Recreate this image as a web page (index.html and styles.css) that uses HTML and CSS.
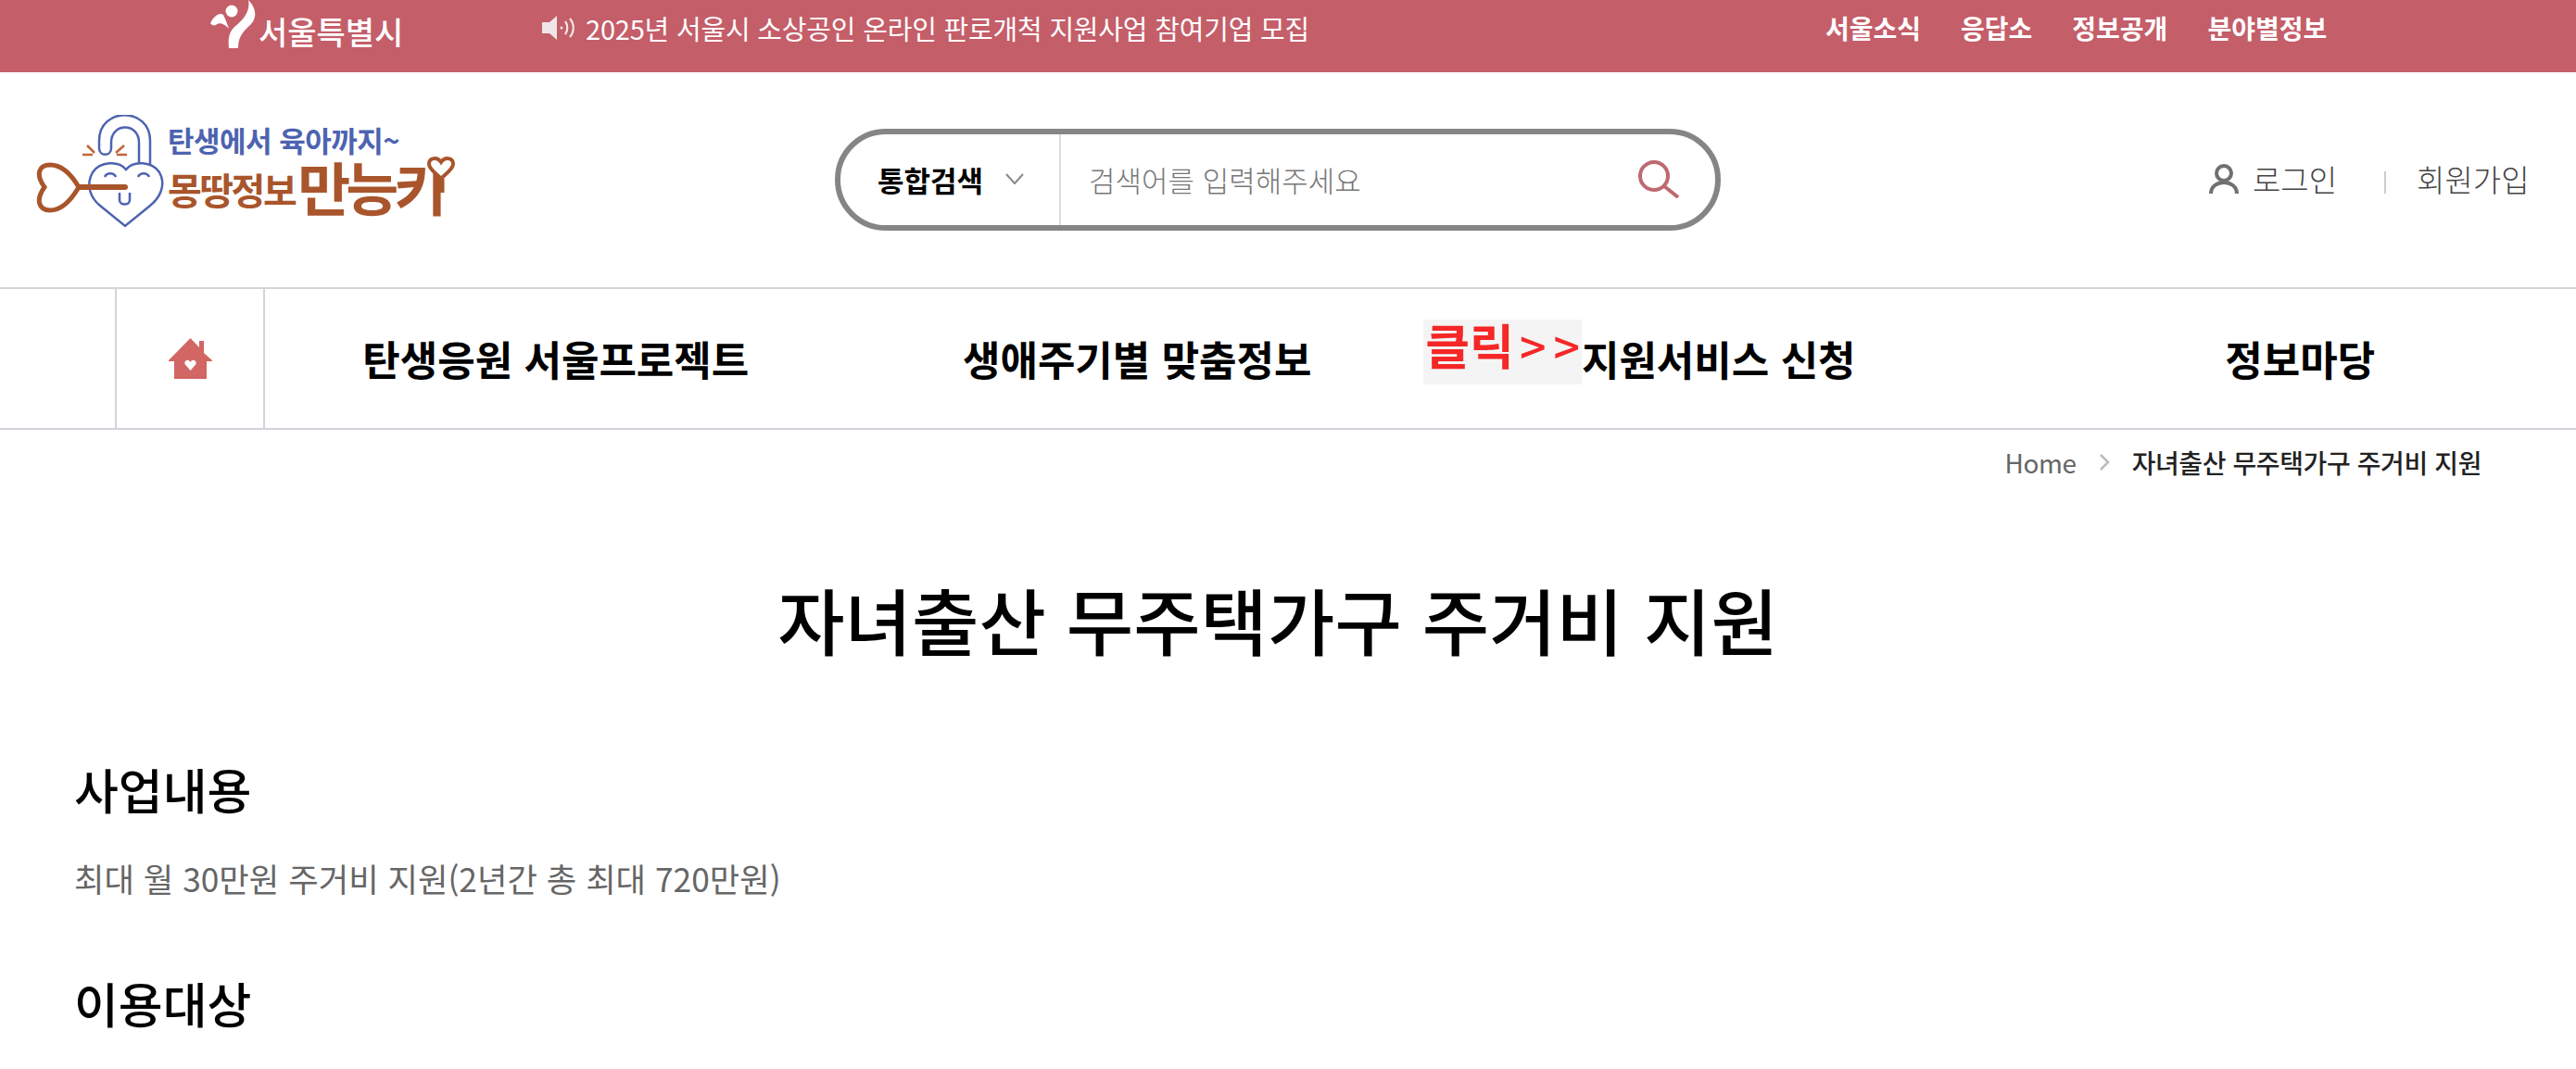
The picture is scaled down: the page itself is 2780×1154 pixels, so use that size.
FILE: index.html
```html
<!DOCTYPE html>
<html lang="ko">
<head>
    <meta charset="UTF-8">
    <meta name="viewport" content="width=device-width, initial-scale=1.0">
    <title>몽땅정보 만능키</title>
    <link rel="stylesheet" href="styles.css">
</head>
<body>
    <div class="topbar">
        <a class="seoul-logo" href="#">
            <svg class="seoul-mark" viewBox="0 0 50 52" width="50" height="52">
                <circle cx="23" cy="12" r="6.5" fill="#fff"/>
                <path d="M0 25C4 17 10 13 14 16C16 20 18 25 20 31C16 26 10 23 6 27C4 28 1 27 0 25Z" fill="#fff"/>
                <path d="M41 0C49 8 51 18 44 26C37 33 30 38 30 52L20 52C19 42 20 36 25 30C32 24 44 14 41 0Z" fill="#fff"/>
            </svg>
            <span class="seoul-name">서울특별시</span>
        </a>
        <div class="notice">
            <svg viewBox="0 0 38 26" width="38" height="26">
                <path d="M0 7H8L16 0V26L8 19H0Z" fill="#efe6e7"/>
                <circle cx="21" cy="13" r="1.5" fill="#efe6e7"/>
                <path d="M25 6C28 10 28 16 25 20M30 3C35 9 35 17 30 23" stroke="#efe6e7" stroke-width="2.2" fill="none"/>
            </svg>
            <span>2025년 서울시 소상공인 온라인 판로개척 지원사업 참여기업 모집</span>
        </div>
        <ul class="top-links">
            <li>서울소식</li>
            <li>응답소</li>
            <li>정보공개</li>
            <li>분야별정보</li>
        </ul>
    </div>

    <header class="header">
        <a class="logo" href="#">
            <svg class="logo-mark" viewBox="0 0 143 122" width="143" height="122">
                <g fill="none" stroke="#4d63b0" stroke-width="2.5">
                    <path d="M82 36V30C82 8 112 8 112 30V52M124 58V28C124 -9 69 -9 69 28V36C69 45 82 45 82 36"/>
                    <path d="M98 59C90 49 70 50 62 62C54 76 60 90 70 98L97 120L124 98C134 90 142 76 134 62C126 50 106 49 98 59Z" fill="#fff"/>
                    <path d="M91 84V92C91 98 102 98 102 92V84"/>
                    <path d="M75 67C77 62 85 62 87 67M111 67C113 62 121 62 123 67"/>
                </g>
                <path d="M10 78C0 64 4 54 16 54C30 54 40 66 47 78C40 90 30 103 16 103C4 103 0 92 10 78Z" fill="none" stroke="#a9552c" stroke-width="5"/>
                <path d="M47 78H97" stroke="#a9552c" stroke-width="6" stroke-linecap="round"/>
                <path d="M56 33L64 41M51 43H62M96 33L87 41M88 43H99" stroke="#c0653a" stroke-width="2.5"/>
            </svg>
            <span class="logo-text">
                <span class="logo-top">탄생에서 육아까지~</span>
                <span class="logo-bottom">
                    <span class="logo-mid">몽땅정보</span>
                    <span class="logo-key">만능키</span>
                    <svg class="logo-heart" viewBox="0 0 32 40" width="32" height="40">
                        <path d="M16 25C12 20 3 15 3 9C3 2 12 1 16 7C20 1 29 2 29 9C29 15 20 20 16 25Z" fill="#fff" stroke="#a9552c" stroke-width="4"/>
                        <path d="M16 25V40" stroke="#a9552c" stroke-width="7"/>
                    </svg>
                </span>
            </span>
        </a>

        <form class="search">
            <div class="search-type">
                <span>통합검색</span>
                <svg viewBox="0 0 20 12" width="20" height="12"><path d="M1 1L10 11L19 1" fill="none" stroke="#888" stroke-width="2"/></svg>
            </div>
            <div class="search-input">
                <span>검색어를 입력해주세요</span>
                <svg viewBox="0 0 46 42" width="46" height="42"><circle cx="18" cy="18" r="15" fill="none" stroke="#bd6a70" stroke-width="4"/><path d="M29 29L44 41" stroke="#bd6a70" stroke-width="4"/></svg>
            </div>
        </form>

        <div class="member">
            <a class="login" href="#">
                <svg viewBox="0 0 32 32" width="32" height="32"><circle cx="16" cy="10" r="8" fill="none" stroke="#707070" stroke-width="4"/><path d="M2 32C2 16 30 16 30 32" fill="none" stroke="#707070" stroke-width="4"/></svg>
                로그인
            </a>
            <i class="sep"></i>
            <a href="#">회원가입</a>
        </div>
    </header>

    <nav class="gnb">
        <a class="gnb-home" href="#">
            <svg viewBox="0 0 47 44" width="47" height="44">
                <path d="M23.5 0L33 10V3H38V16L47 24V25H41V44H6V25H0V24Z" fill="#d16664"/>
                <path d="M23.5 35L17.5 28C16.5 24 21.5 22 23.5 26C25.5 22 30.5 24 29.5 28Z" fill="#fff"/>
            </svg>
        </a>
        <a class="gnb-item" href="#">탄생응원 서울프로젝트</a>
        <a class="gnb-item" href="#">생애주기별 맞춤정보</a>
        <a class="gnb-item" href="#"><span class="gnb-label"><span class="click-badge">클릭<span class="click-arrows">&gt;&gt;</span></span>지원서비스 신청</span></a>
        <a class="gnb-item" href="#">정보마당</a>
    </nav>

    <div class="breadcrumb">
        <span class="crumb-home">Home</span>
        <svg viewBox="0 0 12 18" width="12" height="18"><path d="M2 1L10 9L2 17" fill="none" stroke="#bbb" stroke-width="2.5"/></svg>
        <span class="crumb-now">자녀출산 무주택가구 주거비 지원</span>
    </div>

    <main class="content">
        <h1>자녀출산 무주택가구 주거비 지원</h1>
        <h2>사업내용</h2>
        <p>최대 월 30만원 주거비 지원(2년간 총 최대 720만원)</p>
        <h2>이용대상</h2>
    </main>
</body>
</html>
```

FILE: styles.css
```css
* {
    box-sizing: border-box;
}
html, body {
    height: 100%;
    overflow: hidden;
}
body {
    margin: 0;
    background: #fff;
    color: #000;
    font-family: "Noto Sans CJK KR", "Noto Sans", sans-serif;
}
a {
    color: inherit;
    text-decoration: none;
}

/* top bar */
.topbar {
    display: flex;
    height: 78px;
    padding-left: 227px;
    background-color: #c45e69;
    color: #fff;
}
.seoul-logo {
    display: flex;
    align-items: flex-end;
    width: 358px;
    height: 52px;
}
.seoul-mark {
    flex: none;
}
.seoul-name {
    margin-left: 2px;
    font-size: 34px;
    line-height: 36px;
    font-weight: 500;
    white-space: nowrap;
}
.notice {
    display: flex;
    align-items: center;
    gap: 9px;
    width: 1385px;
    height: 60px;
    font-size: 29px;
    letter-spacing: -0.2px;
    white-space: nowrap;
}
.top-links {
    display: flex;
    gap: 43px;
    margin: 0;
    padding: 0;
    height: 60px;
    align-items: center;
    list-style: none;
    font-size: 28px;
    font-weight: 700;
    white-space: nowrap;
}

/* header */
.header {
    display: flex;
    align-items: center;
    height: 232px;
    padding-left: 38px;
}
.logo {
    display: flex;
    align-items: flex-start;
    width: 863px;
    margin-bottom: 18px;
}
.logo-mark {
    flex: none;
}
.logo-text {
    display: flex;
    flex-direction: column;
    margin-top: 8px;
    white-space: nowrap;
}
.logo-top {
    font-size: 31px;
    line-height: 38px;
    font-weight: 700;
    letter-spacing: -0.5px;
    color: #4d63b0;
}
.logo-bottom {
    position: relative;
    display: flex;
    align-items: flex-end;
    color: #a9552c;
    font-weight: 700;
}
.logo-mid {
    font-size: 40px;
    line-height: 56px;
    letter-spacing: -2.5px;
}
.logo-key {
    font-size: 62px;
    line-height: 62px;
    margin-left: 3px;
    letter-spacing: -5px;
}
.logo-heart {
    position: absolute;
    left: 279px;
    top: -2px;
}
.search {
    display: flex;
    width: 956px;
    height: 110px;
    border: 6px solid #858585;
    border-radius: 55px;
}
.search-type {
    display: flex;
    align-items: center;
    gap: 24px;
    width: 238px;
    padding-left: 40px;
    padding-bottom: 2px;
    border-right: 2px solid #ddd;
    font-size: 31px;
    font-weight: 700;
    white-space: nowrap;
}
.search-input {
    display: flex;
    flex: 1;
    align-items: center;
    justify-content: space-between;
    padding: 0 38px 2px 30px;
    font-size: 31px;
    font-weight: 300;
    color: #777;
}
.member {
    display: flex;
    align-items: center;
    margin-left: 527px;
    padding-bottom: 2px;
    font-size: 33px;
    font-weight: 300;
    color: #444;
    white-space: nowrap;
}
.login {
    display: flex;
    align-items: center;
    gap: 15px;
}
.sep {
    width: 2px;
    height: 24px;
    margin: 8px 33px 0 51px;
    background-color: #ccc;
}

/* main menu */
.gnb {
    display: grid;
    grid-template-columns: 162px repeat(4, 627.5px);
    height: 154px;
    padding-left: 124px;
    border-top: 2px solid #d4d3da;
    border-bottom: 2px solid #d4d3da;
}
.gnb-home {
    display: flex;
    align-items: center;
    justify-content: center;
    border-left: 2px solid #d4d3da;
    border-right: 2px solid #d4d3da;
}
.gnb-item {
    display: flex;
    align-items: center;
    justify-content: center;
    font-size: 44px;
    font-weight: 700;
    white-space: nowrap;
}
.gnb-label {
    position: relative;
}
.click-badge {
    position: absolute;
    right: 100%;
    top: -10px;
    height: 70px;
    padding-left: 2px;
    background-color: #f4f4f4;
    color: #f52727;
    font-size: 52px;
    line-height: 54px;
    font-weight: 700;
}
.click-arrows {
    margin-left: 6px;
    margin-right: -6px;
    font-size: 50px;
    font-weight: 500;
    letter-spacing: 8px;
}

/* breadcrumb */
.breadcrumb {
    display: flex;
    align-items: center;
    justify-content: flex-end;
    height: 70px;
    padding-right: 102px;
    font-size: 28px;
    letter-spacing: -0.4px;
}
.crumb-home {
    color: #666;
}
.breadcrumb svg {
    margin: 0 24px;
}
.crumb-now {
    font-weight: 500;
    color: #222;
}

/* page content */
.content {
    padding: 0 80px;
}
h1 {
    margin: 76px 22px 0 0;
    font-size: 78.7px;
    line-height: 116px;
    font-weight: 500;
    text-align: center;
}
h2 {
    margin: 0;
    font-size: 52px;
    line-height: 74px;
    font-weight: 500;
}
.content h1 + h2 {
    margin-top: 89px;
}
p {
    margin: 33px 0 72px;
    font-size: 35.3px;
    line-height: 52px;
    color: #666;
}
```
